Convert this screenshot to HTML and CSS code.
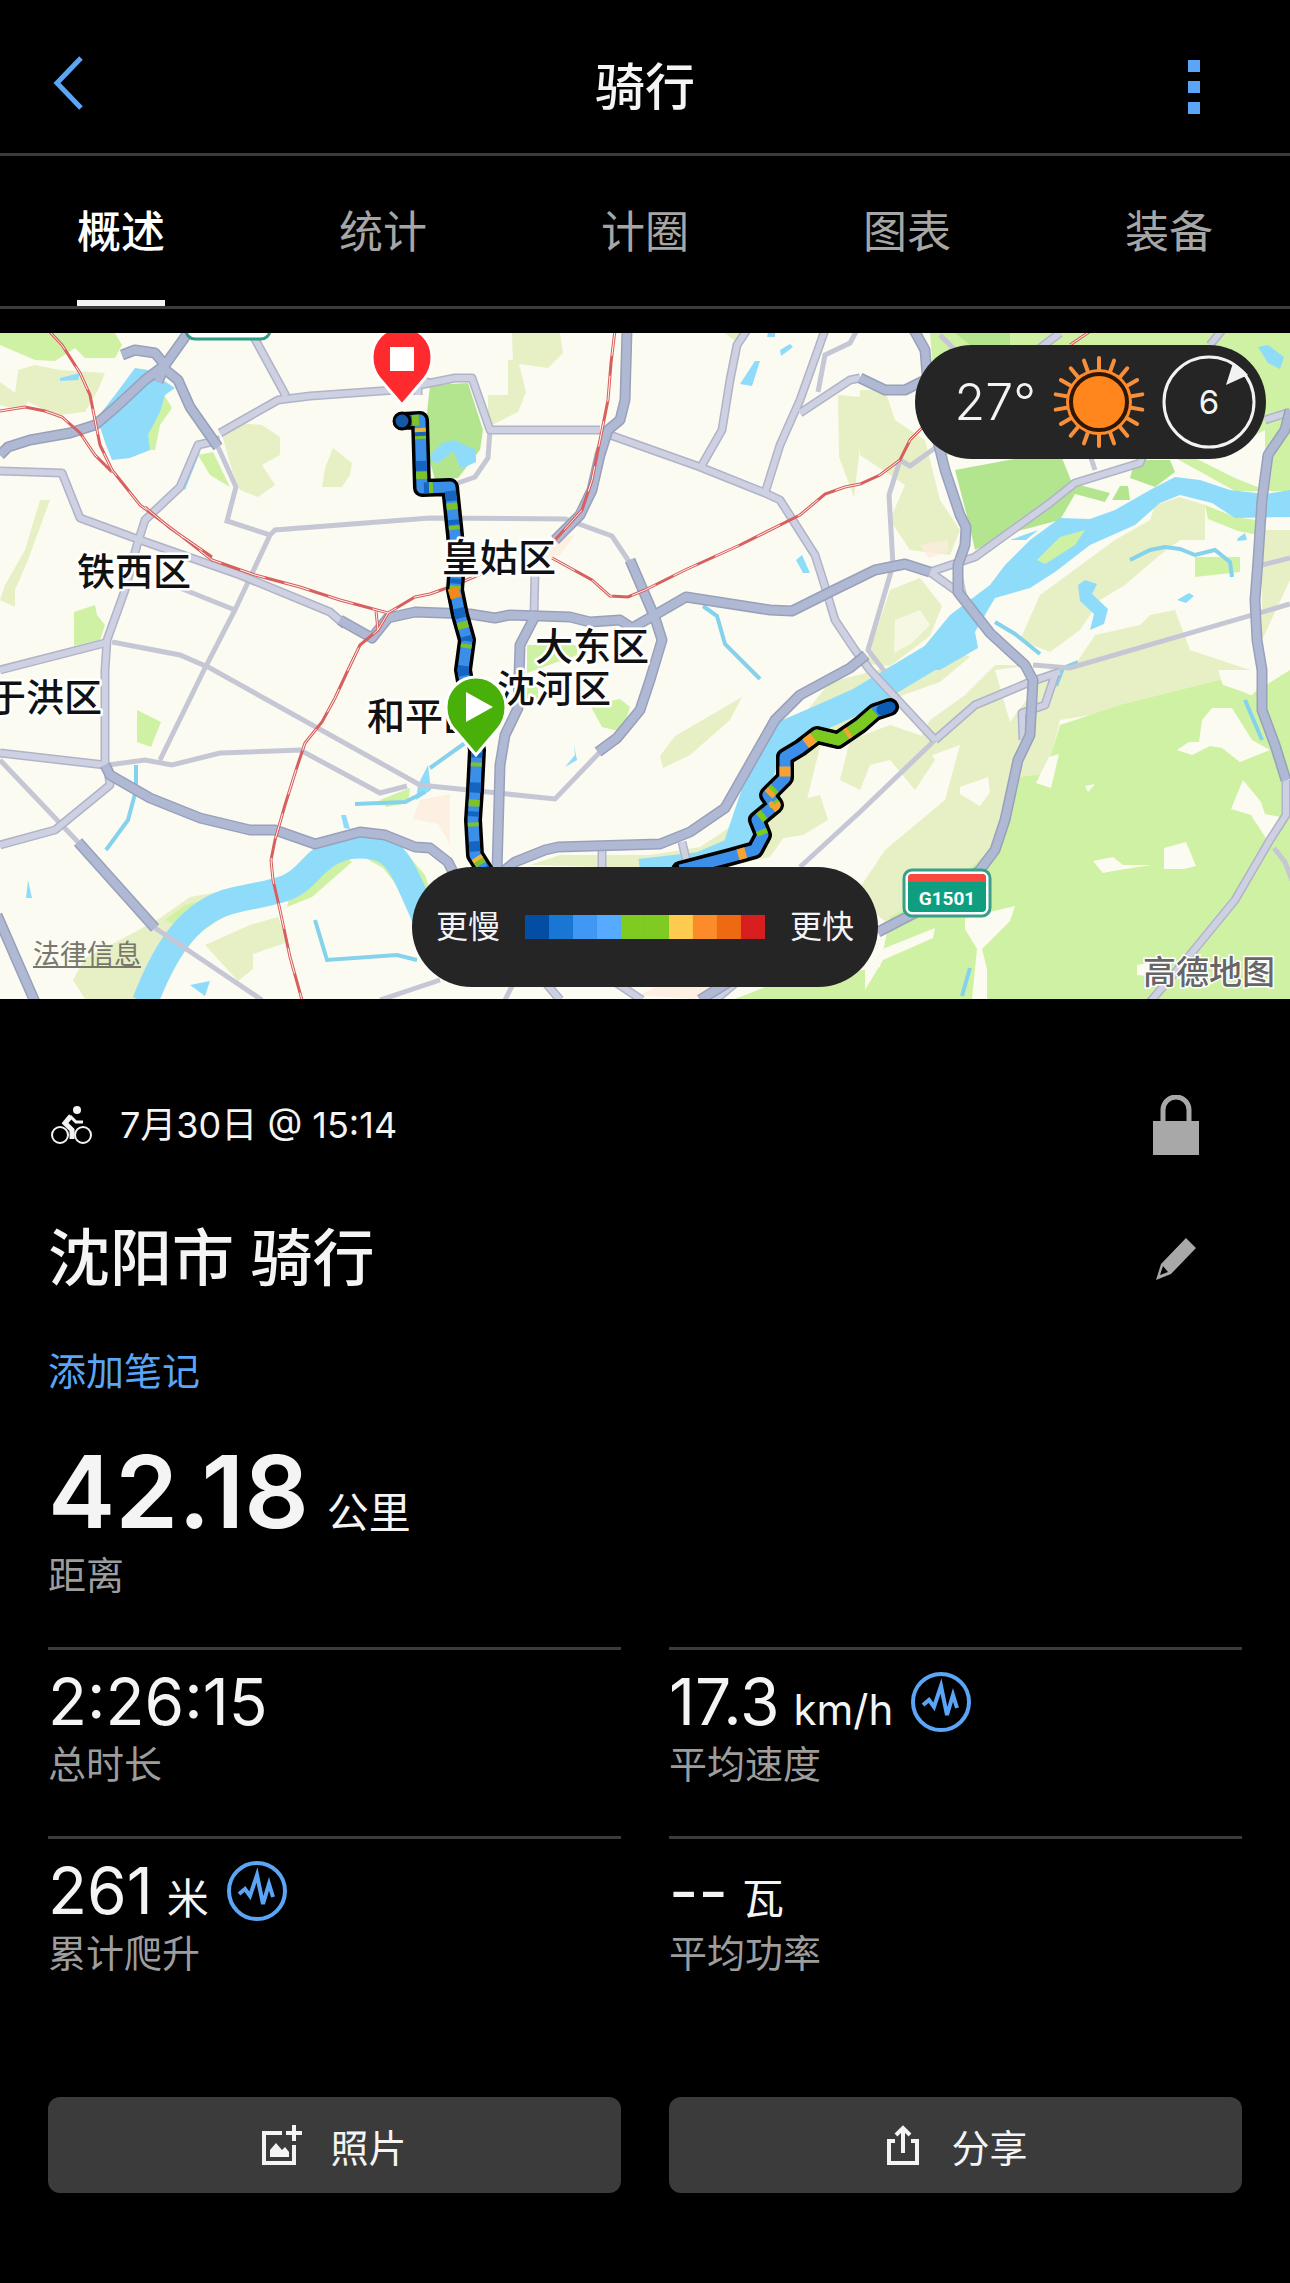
FILE: index.html
```html
<!DOCTYPE html>
<html lang="zh-CN">
<head>
    <meta charset="utf-8">
    <meta name="viewport" content="width=device-width, initial-scale=1">
    <title>骑行</title>
    <link rel="stylesheet" href="styles.css">
</head>
<body>
<header class="topbar">
    <button class="icon-btn" type="button" aria-label="返回">
        <svg width="36" height="56" viewBox="0 0 36 56"><path d="M33 3 9 28l24 25" fill="none" stroke="#5ba5f6" stroke-width="5"/></svg>
    </button>
    <h1>骑行</h1>
    <button class="icon-btn" type="button" aria-label="更多">
        <svg width="12" height="54" viewBox="0 0 12 54"><path d="M0 0h12v12H0zM0 21h12v12H0zM0 42h12v12H0z" fill="#5ba5f6"/></svg>
    </button>
</header>
<nav class="tabs">
    <a class="on" href="#overview">概述</a>
    <a href="#stats">统计</a>
    <a href="#laps">计圈</a>
    <a href="#charts">图表</a>
    <a href="#gear">装备</a>
</nav>

<div class="map">
    <svg class="map-pic" viewBox="0 333 1290 666">
        <defs>
            <!-- 主干道 -->
            <g id="roads-main">
                <path d="M190 330 165 365 145 380 115 408 95 425 70 433 30 440 8 447 0 455"/>
                <path d="M162 367 178 380 190 407 218 447M122 355 135 350 155 353 165 365 158 382"/>
                <path d="M340 620 372 638 388 618 415 612 470 614 495 618 510 615 570 617 590 622 620 620 632 628 660 612 686 597 770 610 792 611 830 592 875 570 905 564 930 572"/>
                <path d="M627 330 625 400 620 420 608 430 600 455 592 490 580 515 555 540"/>
                <path d="M630 560 655 618 662 640 650 680 640 710 617 738 598 752"/>
                <path d="M535 612 533 620 520 645 518 708 505 735 500 765 497 870"/>
                <path d="M914 330 925 350 927 375 935 430 945 470 960 515 966 527 965 545 958 565 958 592 990 633 1025 665 1033 680 1030 735 1018 760 1005 820 995 850 980 870 950 895 905 918 878 932"/>
                <path d="M860 378 885 390 905 390 925 380"/>
                <path d="M1290 410 1285 430 1268 455 1262 500 1258 560 1255 600 1257 640 1262 670 1262 710 1275 745 1286 780"/>
                <path d="M105 765 110 775 150 798 200 818 250 830 275 830 315 844 360 832 385 835 415 847 430 848 448 862 457 880"/>
                <path d="M78 842 155 928M-3 915 35 1002"/>
                <path d="M505 870 515 862 545 850 558 847 660 844 690 832 725 808 775 720 800 695 850 668 866 655"/>
                <path d="M700 1000 740 975"/>
            </g>
            <!-- 次干道 -->
            <g id="roads-second">
                <path d="M250 330 286 396M220 433 278 400 310 396 395 390 430 383 455 378 472 378 490 430 600 430"/>
                <path d="M220 440 198 445 180 487 145 520 137 545 125 590 107 640 105 670 105 765"/>
                <path d="M0 471 62 473 80 518 140 540 240 575 330 612 345 625M0 670 105 643"/>
                <path d="M418 395 418 379 430 383M0 753 105 765M0 845 55 830 110 785 108 770"/>
                <path d="M610 435 700 467 765 493 780 500 815 555 823 580 835 620 855 650 870 670 935 740"/>
                <path d="M765 493 780 445 800 400 825 330M800 413 850 380 860 378M702 465 722 430 730 380 737 345 747 330"/>
                <path d="M535 570 534 615M935 740 975 705 1030 682 1060 672M1055 675 1045 705 1022 713 1023 740"/>
                <path d="M930 572 975 557 1050 503 1075 483 1140 463 1145 450M930 572 958 592"/>
                <path d="M1286 780 1286 815 1270 840 1235 900 1190 955 1150 1002M1265 420 1290 412"/>
                <path d="M1060 333 1040 348M1210 345 1222 330M602 850 602 872M682 842 688 867"/>
                <path d="M545 982 560 1000M615 982 642 1000M715 1000 745 975"/>
            </g>
            <path id="track-west" d="M402 421 420 420 422 488 450 487 455 535 457 562 455 590 460 615 467 640 463 670 477 750 475 790 473 820 475 855 487 874"/>
            <path id="track-east" d="M680 870 730 857 755 850 763 835 757 820 775 805 768 795 785 778 785 757 800 748 817 735 838 740 860 725 875 712 890 707"/>
        </defs>
        <rect x="0" y="333" width="1290" height="666" fill="#fcfbf1"/>

        <!-- 浅色绿地 -->
        <g fill="#e7f0c5">
            <path d="M18 370 35 365 60 370 105 373 98 390 85 412 60 415 48 412 15 395zM0 382 28 402 20 410 0 405z"/>
            <path d="M222 435 240 423 262 425 280 437 280 455 262 465 275 485 258 497 240 490 232 470z"/>
            <path d="M333 448 352 463 350 475 342 487 322 487 325 468zM40 500h10L28 560 15 590v17L0 600l5-15 20-35z"/>
            <path d="M512 333h48l3 20-15 15-35-5zM508 360h10l8 32-8 20-30 15v-32h20z"/>
            <path d="M73 980 85 958 135 932 160 918 190 897 240 888h30l-40 25-45 30-40 56H85zM205 945l45-20 28-8 10 25-35 12v15l-15 12z"/>
            <path d="M742 697 730 720 690 755 663 768l-3-12 15-20zM530 865l30-10h90l50-8 60-40 30-75 40-50 60-15 60-20 20 10-30 25-70 25-50 40-15 60-35 50-60 13z"/>
            <path d="M860 390h25l10 30 30 20 15 60 20 30-10 25-40-5-20-30 15-35-45-30zM890 590l30-12 22 28-12 30-40 30-25-2z"/>
            <path d="M1115 540 1150 520 1155 505 1180 497 1205 505v35h-25l-20 15-35 30-25 15-20 30-30 22-30-12 20-45z"/>
            <path d="M1262 530h28v50l-28 60zM1150 615l25-5 15 40 60 20v20l-190 30-15 60-50 100-65 70-30-15-45-40 30-45 60-50 15-55-55 20 25-45 35-25 30-30h80l20-30 45-10z"/>
            <path d="M850 740l40-15 30 10 15 25-20 30-25-30-20 5-10 25-20-10zM1145 333h-20v10zM725 333l15 12 10-12z"/>
            <path d="M800 800l20-5 8 25-25 15-30 5zM838 395l22 2v50l-6 50-15-40z"/>
        </g>
        <!-- 绿地 -->
        <g fill="#cff1a4">
            <path d="M0 333h115l7 12-7 13H85l-10-10-20 13-20-1-35-15zM930 333h360v158h-55l-65-36H940z"/>
            <path d="M163 393 172 408 160 425 155 450h-7v-15zM198 455l15-3 17 35-20-12zM74 612l21-7 2 10 8 10-5 15-26 6z"/>
            <path d="M137 710l24 12-10 25-14-5zM590 705l30-6 10 8-8 25-20-5zM527 645h50v10l-50 18zM520 680h18v20h-12z"/>
            <path d="M1060 725 1120 705 1220 680 1250 695 1290 670v329H735l30-12 115-20 10-50 70-40 40-35 20-65 25-3z"/>
            <path d="M1195 557h45v15l-45 5zM1205 505l30 12 28 4v15l-25-5-30-12zM380 800l30-12-2 15-22 4zM165 920l20-15 20-5-20 30zM290 895l55-38 7 5-40 35-25 10zM360 855l30 5 20 30-15-7-12-15zM395 840l30 35 6 18-15-10z"/>
        </g>
        <g fill="#b3e58f">
            <path d="M430 385 468 383 483 430 480 450 458 478 435 480 424 440zM955 470l65-12h42l10 25 38 10-5 9-30-8-15 26-50 13-35 17-7-30z"/>
            <path d="M1135 460h35l5 12-20 15-25-9zM1112 500l8-14h8l2 14zM955 333h55v12h-40z"/>
        </g>
        <g fill="#fcfbf1">
            <path d="M1218 670h40l-5 25-30-10zM1202 720l10-12h20l20 32 18 10-10 4-20 8-18-14-12-2-18 9-15-5 12-8h10zM1243 780l18 22 4 12 20 4v6l-15 8-3 8-16-25-20-6z"/>
            <path d="M1164 848l22-6 10 24-12 3h-20zM1093 861l20-4 10 8h28l-38 6-10 2zM1049 757l10-3-8 34-15-5zM1085 786l10-2-7 8zM960 787l28-10 2 15-10 14-20-12z"/>
            <path d="M965 918l50-12-5 15-28 28 5 20v30h-15l5-50-12-20zM880 950l55-22-2 10-50 22-18 30v-20zM1155 962l12 16-30-3v-10zM1200 415l35 30 30-15v60l-30-12-40-20-15-20zM995 670l60-8-45 60z"/>
            <path d="M860 340l45-3 15 35-20 15-40-22zM895 620l25-10 10 15-18 18-18 10z" opacity=".7"/>
        </g>
        <path d="M420 800l30-6v50l-12-20-25-5zM545 540l30-5-15 20-20 5zM640 995l15-8h60l-20 12zM920 545l28-5v12l-20 6z" fill="#fdecdd" opacity=".8"/>

        <!-- 水系 -->
        <g fill="#8fdcfa">
            <path d="M135 368 148 370 160 378 175 388 165 395 160 412 148 435 150 450 130 458 112 460 106 445 97 418 115 395z"/>
            <path d="M200 452 185 490 182 488 193 465zM60 378 80 373 78 380 60 381zM430 455l12-12 12-3 22 10v12l-15 7-8-18-14 12-8-2z"/>
            <path d="M755 361h5l-8 25-12-2zM780 350l10-6 3 3-12 9zM768 333h7v4h-8zM796 560l6-5 8 18h-7zM1258 347l10-2 16 12-4 12-12-6z"/>
            <path d="M905 670 950 615 970 600 990 585 1005 565 1030 540 1060 518 1090 519 1115 510 1150 490 1175 477 1200 480 1230 490 1265 494 1290 490V517L1235 518 1212 503 1180 495 1160 503 1135 525 1090 545 1055 572 1030 588 995 598 975 632 978 648 940 670z"/>
            <path d="M1177 600l12-7 5 3-8 7zM1238 538l7-5 2 7-10 1zM1010 540l28-10-12 10zM1078 585l7-5 12 4-5 10 16 15-4 15-14 6 4-16-14-13z"/>
            <path d="M574 745l3 15-12 7 10-12zM190 985l20-4-5 15zM28 880l4 18h-6zM341 815h5l4 14-6-1zM418 785l10-20 3 25-15 10z"/>
        </g>
        <path class="river" d="M145 1002C165 950 190 910 235 900S290 892 310 870 350 842 375 847 405 875 428 925"/>
        <path class="river" d="M640 872 700 865 735 850 745 820 757 785 765 760 785 733 820 718 860 700 935 655"/>
        <path class="stream" d="M136 765v25l-8 30-22 30M315 920l12 40 70-5 20 5M355 804l50-2 20-10M703 606l14 10 8 28 15 15 20 20M430 768l35-25M1245 700l17 40M970 968l-8 28M995 622l20 12 25 20M1130 560l20-10 15-3 15 2 15 6 20-5 15 12 2 15M1078 662l-15 6-7 18"/>
        <path d="M1037 560 1060 537 1085 530 1075 545 1045 564z" fill="#cff1a4"/>

        <!-- 道路 -->
        <path class="road-minor" d="M218 447 236 487 227 521 270 535 275 530 430 518 565 519 612 536 630 563M270 535 235 610 205 668 160 760M180 588 235 610M112 642 180 655 210 668 420 785 555 799 600 752M108 765 145 760 172 765 220 753 300 750 380 793 407 786M0 760 78 842M155 928 262 1000M490 430 488 458 475 477 458 483M818 392 825 355 850 343 857 330"/>
        <path class="road-minor" d="M935 740 860 812 800 867M1033 665 1070 668 1290 604M1262 565 1290 558M900 460 889 495 893 565 868 650 885 672M900 460 910 466 935 448M960 575 968 610M1090 455 1095 470M380 1000 440 980M515 980 505 1000M1274 848 1285 862 1292 880M940 335 955 350"/>
        <use href="#roads-second" class="case-second"/>
        <use href="#roads-second" class="fill-second"/>
        <use href="#roads-main" class="case-main"/>
        <use href="#roads-main" class="fill-main"/>

        <!-- 铁路 -->
        <g class="rail">
            <path id="rail" d="M48 330 62 345 80 373 90 395 95 420 100 445 112 470 140 505 180 535 212 560 255 575 300 587 340 600 388 613 415 597 430 594 455 585 490 570M0 411 25 407 45 411 62 417 80 433 95 455 112 472M145 507 170 528 212 557M376 611 378 630M388 613 378 630 360 645 348 670 335 698 322 722 305 743 297 767 285 805 275 840 271 860 273 880 280 910 290 957 302 1000M615 330 611 363 608 400 601 435 592 480 582 510 555 540M552 558 592 580 610 596 628 597 645 590 685 570 740 545 800 515 825 494 845 487 860 484 880 475 900 460 910 440 925 425M1070 345 1092 330"/>
            <use href="#rail" class="rail-gap"/>
        </g>

        <!-- 国道牌 -->
        <rect x="186" y="300" width="84" height="39" rx="9" fill="#fff" stroke="#2f9c86" stroke-width="3"/>
        <rect x="904" y="870" width="86" height="46" rx="8" fill="#fff" stroke="#3a9f8a" stroke-width="3"/>
        <rect x="908" y="874" width="78" height="38" rx="4" fill="#109e81"/>
        <path d="M908 882v-4q0-4 4-4h70q4 0 4 4v4z" fill="#f9483f"/>
        <text class="road-no" x="947" y="905">G1501</text>

        <!-- 骑行轨迹 -->
        <g class="track">
            <use href="#track-west" class="t-edge"/>
            <use href="#track-west" class="t-blue"/>
            <use href="#track-west" class="t-green"/>
            <use href="#track-west" class="t-deep"/>
            <use href="#track-west" class="t-hot"/>
            <use href="#track-east" class="t-edge"/>
            <use href="#track-east" class="t-blue"/>
            <use href="#track-east" class="e-green"/>
            <use href="#track-east" class="e-hot"/>
            <circle cx="402" cy="421" r="8" fill="#1459a8" stroke="#000" stroke-width="3"/>
            <path d="M882 710 890 707" stroke="#0c5cb4" stroke-width="11" stroke-linecap="round"/>
            <path d="M453 588 456 598" stroke="#f08a1c" stroke-width="11"/>
        </g>

        <g class="place">
            <text x="77" y="585">铁西区</text>
            <text x="442" y="571">皇姑区</text>
            <text x="535" y="660">大东区</text>
            <text x="497" y="702">沈河区</text>
            <text x="367" y="730">和平区</text>
            <text x="-12" y="711">于洪区</text>
        </g>
        <text class="map-logo" x="1143" y="984">高德地图</text>

        <!-- 起点与终点 -->
        <path class="pin" d="M402 405 379 378Q372 369 372 357a30 30 0 0 1 60 0q0 12-7 21z" fill="#ff2a2d"/>
        <rect x="390" y="347" width="24" height="24" fill="#fff"/>
        <path class="pin" d="M476 755 453 728Q446 719 446 707a30 30 0 0 1 60 0q0 12-7 21z" fill="#49b00a"/>
        <path d="M466 692v30l27-15z" fill="#fff"/>
    </svg>

    <div class="weather">
        <span class="temp">27°</span>
        <svg width="94" height="94" viewBox="-47 -47 94 94">
            <circle r="33" fill="#ff8a2a"/>
            <circle r="28" fill="#ff861c" stroke="#2f1706" stroke-width="4"/>
            <g stroke="#f88f3a" stroke-width="4" stroke-linecap="round">
                <path id="ray" d="M0-33v-11M0 33v11"/>
                <use href="#ray" transform="rotate(20)"/>
                <use href="#ray" transform="rotate(40)"/>
                <use href="#ray" transform="rotate(60)"/>
                <use href="#ray" transform="rotate(80)"/>
                <use href="#ray" transform="rotate(100)"/>
                <use href="#ray" transform="rotate(120)"/>
                <use href="#ray" transform="rotate(140)"/>
                <use href="#ray" transform="rotate(160)"/>
            </g>
        </svg>
        <svg width="94" height="94" viewBox="-47 -47 94 94">
            <circle r="45" fill="none" stroke="#f2f2f2" stroke-width="3"/>
            <path d="M17-17 24-39Q33-34 39-27z" fill="#f2f2f2"/>
            <text class="wind" x="0" y="12">6</text>
        </svg>
    </div>

    <a class="legal" href="#legal">法律信息</a>

    <div class="legend">
        <span>更慢</span>
        <div class="scale"><i></i><i></i><i></i><i></i><i></i><i></i><i></i><i></i><i></i><i></i></div>
        <span>更快</span>
    </div>
</div>

<main class="info">
    <div class="row">
        <svg width="44" height="40" viewBox="0 0 44 40" fill="none" stroke="#f4f4f4">
            <circle cx="12" cy="30" r="8" stroke-width="2"/>
            <circle cx="35" cy="30" r="8" stroke-width="2"/>
            <circle cx="29" cy="5" r="4" fill="#f4f4f4" stroke="none"/>
            <path d="M23 11 17 18l7 7v9" stroke-width="5"/>
            <path d="M22 11 28 17h7" stroke-width="3"/>
        </svg>
        <time class="date">7月30日 @ 15:14</time>
        <button class="side-btn" type="button" aria-label="隐私">
            <svg width="48" height="60" viewBox="0 0 48 60"><path d="M11 30V15a13 13 0 0 1 26 0v15" fill="none" stroke="#a8a8a8" stroke-width="5"/><path d="M1 26h46v34H1z" fill="#a8a8a8"/></svg>
        </button>
    </div>
    <div class="row name-row">
        <h2>沈阳市 骑行</h2>
        <button class="side-btn" type="button" aria-label="编辑名称">
            <svg width="40" height="42" viewBox="0 0 40 42"><path d="M30 0 40 10 15 36 0 42 5 26zM7 28 4 37 12 34z" fill="#a8a8a8" fill-rule="evenodd"/></svg>
        </button>
    </div>
    <a class="note" href="#note">添加笔记</a>

    <div class="distance"><b>42.18</b><span>公里</span></div>
    <p class="label">距离</p>

    <div class="grid">
        <div class="cell">
            <div class="value"><b>2:26:15</b></div>
            <p class="label">总时长</p>
        </div>
        <div class="cell">
            <div class="value">
                <b>17.3</b><span>km/h</span>
                <button class="chart-btn" type="button" aria-label="速度图表">
                    <svg width="60" height="60" viewBox="0 0 60 60" fill="none" stroke="#5ba5f6"><circle cx="30" cy="30" r="28" stroke-width="4"/><path d="M12 33 18 28 23 35 30 14 36 43 42 23 46 36" stroke-width="4"/></svg>
                </button>
            </div>
            <p class="label">平均速度</p>
        </div>
        <div class="cell">
            <div class="value">
                <b>261</b><span>米</span>
                <button class="chart-btn" type="button" aria-label="爬升图表">
                    <svg width="60" height="60" viewBox="0 0 60 60" fill="none" stroke="#5ba5f6"><circle cx="30" cy="30" r="28" stroke-width="4"/><path d="M12 33 18 28 23 35 30 14 36 43 42 23 46 36" stroke-width="4"/></svg>
                </button>
            </div>
            <p class="label">累计爬升</p>
        </div>
        <div class="cell">
            <div class="value"><b>--</b><span>瓦</span></div>
            <p class="label">平均功率</p>
        </div>
    </div>

    <div class="actions">
        <button type="button">
            <svg width="40" height="40" viewBox="0 0 40 40"><path d="M20 8H2v30h30V20M24 8h16M32 0v16" fill="none" stroke="#f4f4f4" stroke-width="4"/><path d="M8 32v-7l6-7 6 7 3-3 4 5v5z" fill="#f4f4f4"/></svg>
            照片
        </button>
        <button type="button">
            <svg width="40" height="40" viewBox="0 0 40 40" fill="none" stroke="#f4f4f4" stroke-width="4"><path d="M12 16H6v22h28V16h-6M20 28V4M13 10l7-7 7 7"/></svg>
            分享
        </button>
    </div>
</main>
</body>
</html>
```
FILE: styles.css
```css
* {
    box-sizing: border-box;
}

body {
    margin: 0;
    background: #000;
    color: #f4f4f4;
    font-family: Inter, "Noto Sans CJK SC", sans-serif;
}

h1, h2, p {
    margin: 0;
}

svg {
    display: block;
    flex: none;
}

button {
    padding: 0;
    border: 0;
    background: none;
    color: inherit;
    font: inherit;
    cursor: pointer;
}

/* 顶栏 */
.topbar {
    display: flex;
    align-items: center;
    justify-content: space-between;
    padding: 21px 48px 0;
    height: 156px;
    border-bottom: 3px solid #3b3b3b;
}

.topbar h1 {
    font-size: 50px;
    line-height: 64px;
    font-weight: 500;
}

.icon-btn {
    display: flex;
    align-items: center;
    justify-content: center;
    width: 96px;
    height: 96px;
}

.icon-btn:first-child {
    justify-content: flex-start;
    padding-bottom: 8px;
}

/* 标签栏 */
.tabs {
    display: flex;
    justify-content: space-between;
    padding: 0 77px;
    border-bottom: 3px solid #3b3b3b;
    margin-bottom: 24px;
}

.tabs a {
    height: 150px;
    line-height: 152px;
    font-size: 44px;
    color: #a6a6a6;
    text-decoration: none;
    border-bottom: 6px solid transparent;
}

.tabs .on {
    color: #fff;
    font-weight: 500;
    border-color: #f4f4f4;
}

/* 地图 */
.map {
    position: relative;
}

.map-pic {
    width: 100%;
    height: auto;
}

.river {
    fill: none;
    stroke: #8fdcfa;
    stroke-width: 26;
}

.stream {
    fill: none;
    stroke: #85d2ec;
    stroke-width: 4;
}

.road-minor {
    fill: none;
    stroke: #c6c7d5;
    stroke-width: 5;
}

.case-second, .fill-second, .case-main, .fill-main {
    fill: none;
    stroke-linejoin: round;
}

.case-second {
    stroke: #b0b3c9;
    stroke-width: 9;
}

.fill-second {
    stroke: #ced1e1;
    stroke-width: 6;
}

.case-main {
    stroke: #98a0bb;
    stroke-width: 11;
}

.fill-main {
    stroke: #b0b9d3;
    stroke-width: 8;
}

.rail {
    fill: none;
    stroke: #d85f5f;
    stroke-width: 3;
}

.rail-gap {
    stroke: #fff5f0;
    stroke-width: 1;
    stroke-dasharray: 26 20;
}

.road-no {
    font: bold 19px Roboto, sans-serif;
    fill: #fff;
    text-anchor: middle;
}

.track {
    fill: none;
    stroke-linejoin: round;
}

.t-edge {
    stroke: #000;
    stroke-width: 18;
    stroke-linecap: round;
}

.t-blue {
    stroke: #3b8fe8;
    stroke-width: 11;
}

.t-green {
    stroke: #7cc228;
    stroke-width: 11;
    stroke-dasharray: 7 16 4 33;
    stroke-dashoffset: -10;
}

.t-deep {
    stroke: #1565c0;
    stroke-width: 11;
    stroke-dasharray: 10 19 5 25;
}

.t-hot {
    stroke: #e8b93c;
    stroke-width: 11;
    stroke-dasharray: 4 150;
    stroke-dashoffset: -26;
}

.e-green {
    stroke: #7cc920;
    stroke-width: 11;
    stroke-dasharray: 0 95 5 14 6 10 8 12 6 64 78 400;
}

.e-hot {
    stroke: #f9a233;
    stroke-width: 11;
    stroke-dasharray: 0 60 8 62 5 12 5 20 10 34 10 36 4 400;
}

.place {
    font-family: "Noto Sans CJK SC", sans-serif;
    font-size: 38px;
    font-weight: 500;
    fill: #111;
    stroke: #fff;
    stroke-width: 5;
    stroke-linejoin: round;
    paint-order: stroke;
}

.map-logo {
    font-family: "Noto Sans CJK SC", sans-serif;
    font-size: 33px;
    font-weight: 500;
    fill: #666;
    stroke: #fff;
    stroke-width: 3;
    paint-order: stroke;
}

.pin {
    stroke: #fff;
    stroke-width: 3;
}

.weather {
    position: absolute;
    top: 12px;
    right: 24px;
    display: flex;
    align-items: center;
    gap: 16px;
    height: 114px;
    padding: 0 10px 0 40px;
    border-radius: 57px;
    background: #252525;
}

.temp {
    font-size: 50px;
    line-height: 60px;
    font-weight: 300;
}

.wind {
    font-size: 33px;
    fill: #f4f4f4;
    text-anchor: middle;
}

.legal {
    position: absolute;
    left: 33px;
    bottom: 24px;
    font-size: 27px;
    line-height: 40px;
    color: #77776c;
}

.legend {
    position: absolute;
    left: 50%;
    bottom: 12px;
    transform: translateX(-50%);
    display: flex;
    align-items: center;
    gap: 25px;
    height: 120px;
    padding: 0 24px;
    border-radius: 60px;
    background: #252525;
    font-size: 32px;
    line-height: 48px;
    white-space: nowrap;
}

.scale {
    display: flex;
}

.scale i {
    width: 24px;
    height: 24px;
    background: #034ea2;
}

.scale i:nth-child(2) { background: #1976d2; }
.scale i:nth-child(3) { background: #4098f4; }
.scale i:nth-child(4) { background: #56aaff; }
.scale i:nth-child(5), .scale i:nth-child(6) { background: #80cb22; }
.scale i:nth-child(7) { background: #ffcb4e; }
.scale i:nth-child(8) { background: #fb8c29; }
.scale i:nth-child(9) { background: #ef6812; }
.scale i:nth-child(10) { background: #d71f20; }

/* 活动信息 */
.info {
    padding: 96px 48px 87px;
}

.row {
    display: flex;
    align-items: center;
}

.date {
    margin-left: 28px;
    font-size: 36px;
    line-height: 60px;
}

.side-btn {
    display: flex;
    justify-content: center;
    width: 132px;
    margin-left: auto;
}

.name-row {
    margin-top: 64px;
}

h2 {
    font-size: 62px;
    line-height: 80px;
    font-weight: 500;
}

.note {
    display: block;
    width: max-content;
    margin-top: 48px;
    font-size: 38px;
    line-height: 48px;
    color: #5ba5f6;
    text-decoration: none;
}

.distance {
    display: flex;
    align-items: baseline;
    gap: 18px;
    height: 96px;
    margin-top: 48px;
    line-height: 96px;
}

.distance b {
    font-size: 101px;
    font-weight: 600;
}

.distance span {
    font-size: 42px;
}

.distance + .label {
    margin-top: 12px;
}

.label {
    font-size: 38px;
    line-height: 48px;
    color: #9d9d9d;
}

.grid {
    display: grid;
    grid-template-columns: 1fr 1fr;
    column-gap: 48px;
    margin-top: 48px;
}

.cell {
    padding: 16px 0 48px;
    border-top: 3px solid #3b3b3b;
}

.value {
    display: flex;
    align-items: baseline;
    gap: 14px;
    height: 72px;
    margin-bottom: 2px;
    line-height: 72px;
}

.value b {
    font-size: 64px;
    font-weight: 400;
}

.value span {
    font-size: 42px;
}

.chart-btn {
    align-self: center;
    margin-left: 4px;
}

.actions {
    display: grid;
    grid-template-columns: 1fr 1fr;
    gap: 48px;
    margin-top: 72px;
}

.actions button {
    display: flex;
    align-items: center;
    justify-content: center;
    gap: 28px;
    height: 96px;
    border-radius: 12px;
    background: #3b3b3b;
    font-size: 38px;
}
```
